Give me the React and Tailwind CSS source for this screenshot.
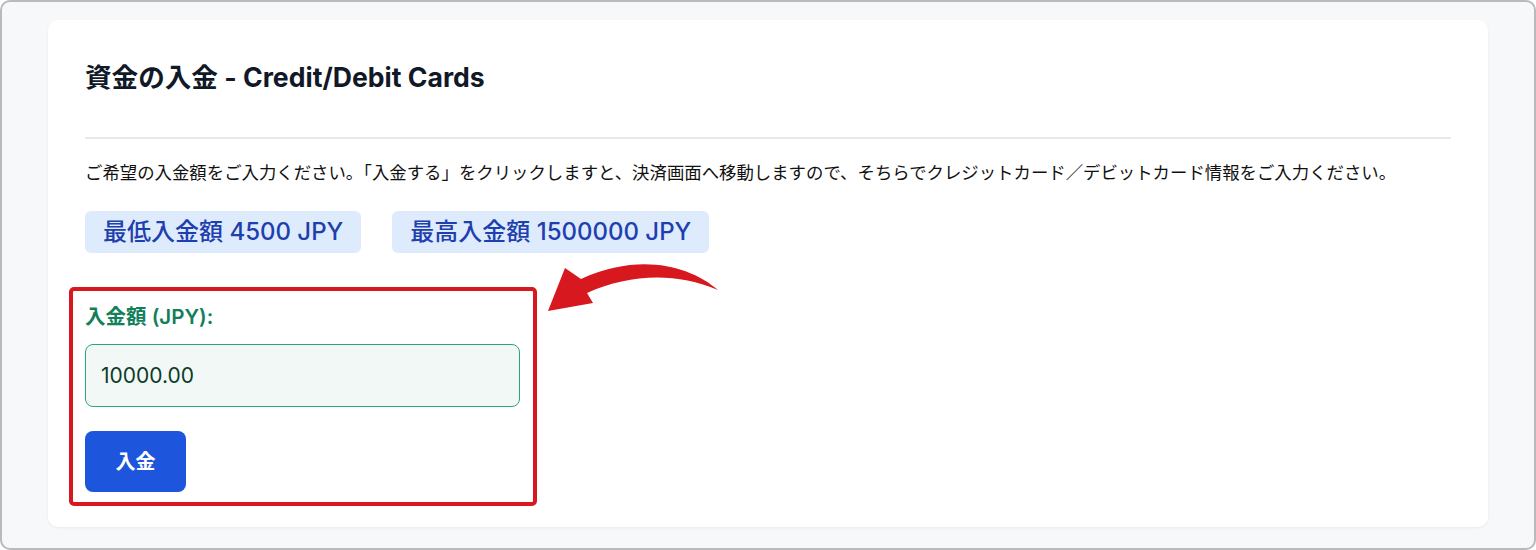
import React, { useState } from 'react';

const JP = "font-['Inter','Noto_Sans_CJK_JP',sans-serif]";

// 赤い注釈の曲線矢印（viewBox はページ座標）
const CurvedArrow = () => (
  <svg
    className="absolute left-[452px] top-[222px] pointer-events-none"
    width="240"
    height="90"
    viewBox="500 242 240 90"
  >
    <path
      d="M718 290 C 690 266, 640 252, 581 279 L 565 268 L 548 311 L 593 303 L 587 293 C 630 274, 675 272, 718 290 Z"
      fill="#d7191f"
    />
  </svg>
);

const DepositForm = () => {
  const [amount, setAmount] = useState('10000.00');

  return (
    <div className="relative w-[435px] mt-[50px]">
      {/* ハイライト枠 */}
      <div className="absolute -left-[16px] -top-[16px] w-[468px] h-[219px] border-4 border-[#d7191f] rounded-[5px] pointer-events-none" />
      <label className="block text-[20.5px] leading-7 font-semibold text-[#12805a]">
        入金額 (JPY):
      </label>
      <input
        type="text"
        value={amount}
        onChange={(e) => setAmount(e.target.value)}
        className="mt-[13px] block w-full h-[63px] px-[15px] text-[21px] text-[#0d3b2a] bg-[#f2f8f5] border border-[#2ea577] rounded-lg outline-none"
      />
      <button className="mt-[24px] w-[101px] h-[61px] bg-[#1d56dc] text-white text-[20px] font-bold rounded-lg">
        入金
      </button>
    </div>
  );
};

export default function App() {
  return (
    <div className={`w-[1536px] h-[550px] bg-[#f7f8fa] border-2 border-[#b9babc] rounded-[10px] overflow-hidden ${JP}`}>
      <div className="relative ml-[46px] mt-[18px] w-[1440px] h-[507px] bg-white rounded-[10px] shadow-[0_1px_3px_rgba(0,0,0,0.06)] pt-[41px] px-[37px]">
        <h2 className="text-[26.6px] leading-8 font-bold text-[#111827]">
          資金の入金 - Credit/Debit Cards
        </h2>

        <div className="mt-[44px] border-t-2 border-[#e7e8eb]" />

        <p className="mt-[21px] text-[17.4px] leading-[26px] text-[#111111]">
          ご希望の入金額をご入力ください。「入金する」をクリックしますと、決済画面へ移動しますので、そちらでクレジットカード／デビットカード情報をご入力ください。
        </p>

        <div className="mt-[25px] flex gap-[31px]">
          <span className="h-[42px] px-[18px] flex items-center bg-[#deebfd] text-[#1e40af] text-[24px] font-medium rounded-md">
            最低入金額 4500 JPY
          </span>
          <span className="h-[42px] px-[18px] flex items-center bg-[#deebfd] text-[#1e40af] text-[24px] font-medium rounded-md">
            最高入金額 1500000 JPY
          </span>
        </div>

        <DepositForm />

        <CurvedArrow />
      </div>
    </div>
  );
}
